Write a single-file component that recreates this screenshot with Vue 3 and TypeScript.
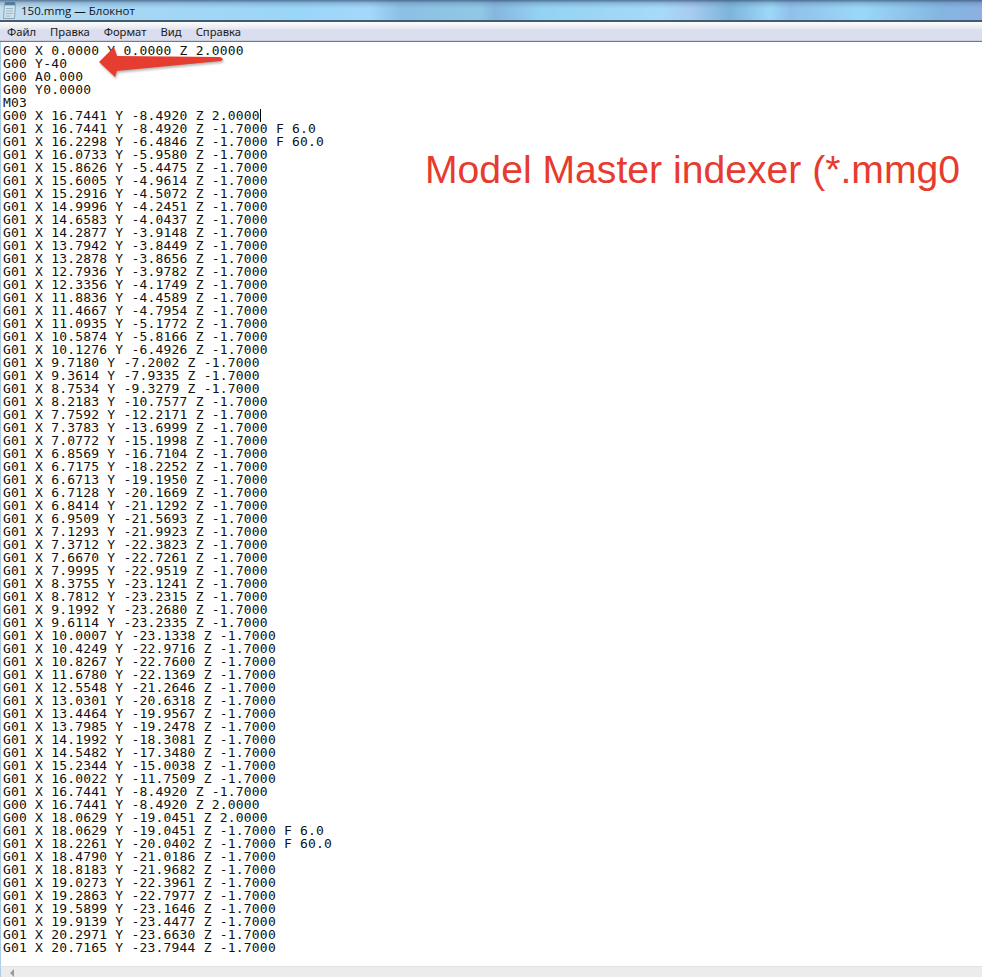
<script setup lang="ts">
const rows: string[] = [
  'G00 X 0.0000 Y 0.0000 Z 2.0000',
  'G00 Y-40',
  'G00 A0.000',
  'G00 Y0.0000',
  'M03',
  'G00 X 16.7441 Y -8.4920 Z 2.0000',
  'G01 X 16.7441 Y -8.4920 Z -1.7000 F 6.0',
  'G01 X 16.2298 Y -6.4846 Z -1.7000 F 60.0',
  ...[
    '16.0733 -5.9580', '15.8626 -5.4475', '15.6005 -4.9614', '15.2916 -4.5072',
    '14.9996 -4.2451', '14.6583 -4.0437', '14.2877 -3.9148', '13.7942 -3.8449',
    '13.2878 -3.8656', '12.7936 -3.9782', '12.3356 -4.1749', '11.8836 -4.4589',
    '11.4667 -4.7954', '11.0935 -5.1772', '10.5874 -5.8166', '10.1276 -6.4926',
    '9.7180 -7.2002', '9.3614 -7.9335', '8.7534 -9.3279', '8.2183 -10.7577',
    '7.7592 -12.2171', '7.3783 -13.6999', '7.0772 -15.1998', '6.8569 -16.7104',
    '6.7175 -18.2252', '6.6713 -19.1950', '6.7128 -20.1669', '6.8414 -21.1292',
    '6.9509 -21.5693', '7.1293 -21.9923', '7.3712 -22.3823', '7.6670 -22.7261',
    '7.9995 -22.9519', '8.3755 -23.1241', '8.7812 -23.2315', '9.1992 -23.2680',
    '9.6114 -23.2335', '10.0007 -23.1338', '10.4249 -22.9716', '10.8267 -22.7600',
    '11.6780 -22.1369', '12.5548 -21.2646', '13.0301 -20.6318', '13.4464 -19.9567',
    '13.7985 -19.2478', '14.1992 -18.3081', '14.5482 -17.3480', '15.2344 -15.0038',
    '16.0022 -11.7509', '16.7441 -8.4920'
  ].map(pair),
  'G00 X 16.7441 Y -8.4920 Z 2.0000',
  'G00 X 18.0629 Y -19.0451 Z 2.0000',
  'G01 X 18.0629 Y -19.0451 Z -1.7000 F 6.0',
  'G01 X 18.2261 Y -20.0402 Z -1.7000 F 60.0',
  ...[
    '18.4790 -21.0186', '18.8183 -21.9682', '19.0273 -22.3961', '19.2863 -22.7977',
    '19.5899 -23.1646', '19.9139 -23.4477', '20.2971 -23.6630', '20.7165 -23.7944'
  ].map(pair)
]

function pair(p: string): string {
  const [x, y] = p.split(' ')
  return `G01 X ${x} Y ${y} Z -1.7000`
}

const before = rows.slice(0, 6).join('\n')
const after = rows.slice(6).join('\n')
const menu = ['Файл', 'Правка', 'Формат', 'Вид', 'Справка']
</script>

<template>
  <div class="window">
    <header class="title">
      <svg class="doc" width="15" height="18" viewBox="0 0 15 18">
        <path d="M2.500 2.500h11l-1 15h-11Z" fill="#cfe3ee" stroke="#8ba3b6" />
        <path d="M3 1h10.500l-.5 3.500H2.500Z" fill="#6fa8cf" />
        <path d="M4 1v3M6 1v3M8 1v3M10 1v3M12 1v3" stroke="#37556e" stroke-width="1" />
        <path d="M4 7.500h7M4 10h7M3.800 12.500h7M3.600 15h5" stroke="#9fb6c6" stroke-width="1" />
      </svg>
      <span class="caption">150.mmg — Блокнот</span>
    </header>
    <nav class="menu">
      <span v-for="m in menu" :key="m">{{ m }}</span>
    </nav>
    <main class="edit">
      <pre class="text">{{ before }}<i class="caret"></i>
{{ after }}</pre>
      <svg class="arrow" width="130" height="36" viewBox="0 0 130 36">
        <path d="M1 20 L16 5 L19 14 L122 15 Q127 17 123 19 L19 29 L17 35 Z" fill="#e53d30" />
      </svg>
      <div class="note">Model Master indexer (*.mmg0</div>
    </main>
    <footer class="scroll">
      <svg class="left" width="6" height="8" viewBox="0 0 6 8"><path d="M5 0v8L1 4Z" fill="#9a9a9a" /></svg>
    </footer>
  </div>
</template>

<style>
html, body { margin: 0; background: #fff; }
</style>

<style scoped>
.window {
  width: 982px;
  height: 977px;
  display: flex;
  flex-direction: column;
  overflow: hidden;
  background: #fff;
}
.title {
  height: 20px;
  flex: none;
  display: flex;
  align-items: center;
  gap: 4px;
  padding-left: 2px;
  border-bottom: 2px solid;
  border-image: linear-gradient(180deg, #b8d8ec 50%, #445a70 50%) 1;
  background:
    linear-gradient(180deg, rgba(50, 75, 110, .7) 0, rgba(90, 125, 165, .35) 3px, rgba(255, 255, 255, 0) 8px),
    linear-gradient(90deg, #c4dff0 0, #a8d6f4 100px, #9ad6f8 300px, #a4d8fa 370px, #8cc0e4 400px, #8fc8e4 480px, #86b6de 495px, #94d2f2 540px, #a6daf8 660px, #a8ccf0 690px, #7eb4da 730px, #9cd8f8 770px, #90c0ea 790px, #9bd8f8 860px, #84b6e0 940px, #8cb0e0 982px);
}
.doc { flex: none; }
.caption {
  font: 11.5px "Open Sans", "Noto Sans", sans-serif;
  color: #10151c;
  white-space: nowrap;
}
.menu {
  height: 20px;
  flex: none;
  display: flex;
  align-items: center;
  gap: 14px;
  padding-left: 7px;
  box-sizing: border-box;
  font: 11.25px "Noto Sans", sans-serif;
  color: #1a1a1a;
  background: linear-gradient(180deg, #fbfcfd 0, #e9ebf3 6px, #dadeee 8px, #dadeee 18px, #b9c0d0 19px);
  border-bottom: 1px solid #3f88bd;
}
.edit {
  flex: 1;
  position: relative;
  border-left: 1px solid #a9cfe6;
  padding: 2px 0 0 2px;
}
.text {
  margin: 0;
  font: 13px/13px "DejaVu Sans Mono", monospace;
  letter-spacing: 0.2px;
  color: #111;
  white-space: pre;
}
.caret {
  display: inline-block;
  width: 1px;
  height: 13px;
  background: #000;
  vertical-align: top;
}
.arrow {
  position: absolute;
  left: 97px;
  top: 0;
  filter: drop-shadow(1px 2px 1px rgba(60, 60, 60, .35));
}
.note {
  position: absolute;
  left: 424px;
  top: 106px;
  font: 39.15px "Liberation Sans", Arial, sans-serif;
  color: #e63b2e;
  white-space: nowrap;
}
.scroll {
  height: 10px;
  flex: none;
  background: #ececec;
  border-top: 1px solid #e2e2e2;
  border-left: 1px solid #a9cfe6;
  position: relative;
}
.left {
  position: absolute;
  left: 8px;
  top: 2px;
}
</style>
